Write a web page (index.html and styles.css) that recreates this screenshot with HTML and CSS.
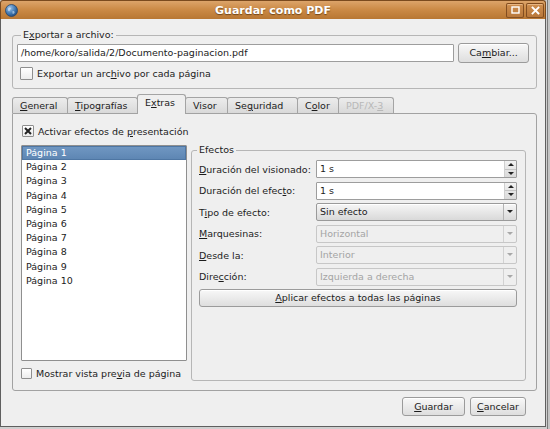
FILE: index.html
```html
<!DOCTYPE html>
<html lang="es">
<head>
<meta charset="utf-8">
<title>Guardar como PDF</title>
<link rel="stylesheet" href="styles.css">
</head>
<body>
<div class="desktop">
  <div class="window">
    <div class="titlebar">
      <div class="tb-left">
        <svg class="globe" width="13" height="13" viewBox="0 0 13 13">
          <defs>
            <radialGradient id="g" cx="0.35" cy="0.3" r="0.8">
              <stop offset="0" stop-color="#9cc4ea"/>
              <stop offset="0.6" stop-color="#3e74ad"/>
              <stop offset="1" stop-color="#1f4777"/>
            </radialGradient>
          </defs>
          <circle cx="6.5" cy="6.5" r="6" fill="url(#g)" stroke="#26456b" stroke-width="0.8"/>
          <path d="M3 4.5 C4 3 5.5 3.2 6 4.3 C6.3 5.2 5 5.6 4.8 6.6 C4.6 7.6 3.4 7.4 3 6.3 Z" fill="#cfe3f4" opacity="0.7"/>
          <path d="M7.5 7 C8.6 6.6 9.8 7.2 9.6 8.4 C9.4 9.6 8.2 10.2 7.4 9.4 Z" fill="#cfe3f4" opacity="0.6"/>
        </svg>
      </div>
      <div class="title">Guardar como PDF</div>
      <div class="tb-right">
        <span class="wbtn">
          <svg width="9" height="8" viewBox="0 0 9 8"><rect x="1" y="1" width="7" height="6" fill="none" stroke="#fff" stroke-width="1.4"/></svg>
        </span>
        <span class="wbtn">
          <svg width="9" height="9" viewBox="0 0 9 9"><path d="M1.5 1.5 L7.5 7.5 M7.5 1.5 L1.5 7.5" stroke="#fff" stroke-width="1.8" stroke-linecap="square"/></svg>
        </span>
      </div>
    </div>
    <div class="client">
      <fieldset class="group export-group">
        <legend class="export-legend">E<u>x</u>portar a archivo:</legend>
        <div class="file-row">
          <div class="entry file-entry">/home/koro/salida/2/Documento-paginacion.pdf</div>
          <div class="btn change-btn">Ca<u>m</u>biar...</div>
        </div>
        <div class="check-row export-check">
          <span class="check"></span>
          <span class="ctext">Exportar un arc<u>h</u>ivo por cada página</span>
        </div>
      </fieldset>

      <div class="tabbar">
        <div class="tab tab-general"><u>G</u>eneral</div>
        <div class="tab tab-tipo"><u>T</u>ipografías</div>
        <div class="tab tab-extras active">E<u>x</u>tras</div>
        <div class="tab tab-visor">Visor</div>
        <div class="tab tab-seg">Se<u>g</u>uridad</div>
        <div class="tab tab-color">C<u>o</u>lor</div>
        <div class="tab tab-pdfx disabled">PDF/X-<u>3</u></div>
      </div>

      <div class="pane">
        <div class="check-row pane-check">
          <span class="check checked">
            <svg width="8" height="8" viewBox="0 0 8 8"><path d="M1 1 L7 7 M7 1 L1 7" stroke="#222" stroke-width="2"/></svg>
          </span>
          <span class="ctext">Activar efectos de <u>p</u>resentación</span>
        </div>
        <div class="pane-body">
          <div class="list-col">
            <div class="list">
              <div class="item selected">Página 1</div>
              <div class="item">Página 2</div>
              <div class="item">Página 3</div>
              <div class="item">Página 4</div>
              <div class="item">Página 5</div>
              <div class="item">Página 6</div>
              <div class="item">Página 7</div>
              <div class="item">Página 8</div>
              <div class="item">Página 9</div>
              <div class="item">Página 10</div>
            </div>
            <div class="check-row preview-check">
              <span class="check"></span>
              <span class="ctext">Mostrar vista pre<u>v</u>ia de página</span>
            </div>
          </div>

          <fieldset class="group effects-group">
            <legend class="effects-legend">Efectos</legend>
            <div class="frow">
              <span class="flabel"><u>D</u>uración del visionado:</span>
              <div class="entry spin"><span class="spin-text">1 s</span>
                <span class="spin-btns"><span class="sb up"></span><span class="sb down"></span></span>
              </div>
            </div>
            <div class="frow">
              <span class="flabel">Duración del efec<u>t</u>o:</span>
              <div class="entry spin"><span class="spin-text">1 s</span>
                <span class="spin-btns"><span class="sb up"></span><span class="sb down"></span></span>
              </div>
            </div>
            <div class="frow">
              <span class="flabel">T<u>i</u>po de efecto:</span>
              <div class="combo"><span class="combo-text">Sin efecto</span><span class="combo-arrow"></span></div>
            </div>
            <div class="frow">
              <span class="flabel"><u>M</u>arquesinas:</span>
              <div class="combo disabled"><span class="combo-text">Horizontal</span><span class="combo-arrow"></span></div>
            </div>
            <div class="frow">
              <span class="flabel"><u>D</u>esde la:</span>
              <div class="combo disabled"><span class="combo-text">Interior</span><span class="combo-arrow"></span></div>
            </div>
            <div class="frow">
              <span class="flabel">Dire<u>c</u>ción:</span>
              <div class="combo disabled"><span class="combo-text">Izquierda a derecha</span><span class="combo-arrow"></span></div>
            </div>
            <div class="btn apply-btn"><u>A</u>plicar efectos a todas las páginas</div>
          </fieldset>
        </div>
      </div>

      <div class="footer">
        <div class="btn save-btn"><u>G</u>uardar</div>
        <div class="btn cancel-btn"><u>C</u>ancelar</div>
      </div>
    </div>
  </div>
</div>
</body>
</html>
```

FILE: styles.css
```css
* { box-sizing: border-box; }
html, body { margin: 0; padding: 0; }
body {
  width: 550px;
  height: 429px;
  overflow: hidden;
  font-family: "DejaVu Sans", "Liberation Sans", sans-serif;
  font-size: 9.5px;
  color: #1c1c1c;
  background: #3a3a3a;
}
u { text-decoration: underline; text-underline-offset: 1px; text-decoration-thickness: 1px; }

.desktop {
  position: relative;
  width: 550px;
  height: 429px;
  background: linear-gradient(90deg, #cfcfcf 0, #cfcfcf 547px, #7a7a7a 547px, #7a7a7a 548px, #c4c4c4 548px);
}
.window {
  position: absolute;
  left: 0;
  top: 0;
  width: 546px;
  height: 427px;
  display: flex;
  flex-direction: column;
}

/* title bar */
.titlebar {
  height: 19px;
  display: grid;
  grid-template-columns: 60px 1fr 60px;
  align-items: center;
  background: linear-gradient(#dca46a 0, #cc8b47 45%, #b87733 100%);
  border: 1px solid #7a4a1e;
  border-bottom: none;
  border-radius: 3px 3px 0 0;
}
.tb-left { display: flex; align-items: center; padding-left: 4px; }
.globe { display: block; }
.title {
  text-align: center;
  color: #fff;
  font-weight: bold;
  font-size: 11px;
  text-shadow: 0 1px 1px rgba(60, 30, 0, 0.6);
}
.tb-right { display: flex; justify-content: flex-end; gap: 2px; padding-right: 1px; }
.wbtn {
  width: 18px;
  height: 15px;
  display: flex;
  align-items: center;
  justify-content: center;
  border: 1px solid rgba(110, 60, 20, 0.75);
  border-radius: 2px;
  background: linear-gradient(#cf8f50, #b9783a);
  box-shadow: inset 0 1px 0 rgba(255, 220, 180, 0.5);
}
.wbtn svg { display: block; }

/* client */
.client {
  flex: 1;
  background: #efefef;
  border: 1px solid #5f5f5f;
  border-top: none;
  display: flex;
  flex-direction: column;
}

.group {
  border: 1px solid #b6b6b6;
  border-radius: 3px;
  margin: 0;
  min-width: 0;
}
.group legend {
  line-height: 12px;
  padding: 0 2px;
}

.export-group {
  margin: 10px 8px 0 11px;
  padding: 2px 7px 8px 4px;
}
.export-legend { margin-left: 4px; }

.file-row {
  display: flex;
  align-items: center;
  gap: 4px;
  height: 20px;
}
.entry {
  background: #fff;
  border: 1px solid #9d9d9d;
  border-radius: 1px;
  height: 18px;
  line-height: 16px;
  padding-left: 3px;
  white-space: nowrap;
  overflow: hidden;
}
.file-entry { width: 438px; }
.btn {
  border: 1px solid #9b9b9b;
  border-radius: 3px;
  background: linear-gradient(#f8f8f8, #dedede);
  box-shadow: inset 0 1px 0 #ffffff;
  text-align: center;
  white-space: nowrap;
}
.change-btn { width: 71px; height: 20px; line-height: 18px; }

.check-row { display: flex; align-items: center; gap: 4px; height: 13px; }
.ctext { white-space: nowrap; }
.check {
  width: 13px;
  height: 13px;
  border: 1px solid #8e8e8e;
  border-radius: 1px;
  background: linear-gradient(#ffffff, #ececec);
  display: flex;
  align-items: center;
  justify-content: center;
  flex: none;
}
.export-check { margin: 4px 0 0 3px; }

/* tabs */
.tabbar {
  display: flex;
  align-items: flex-end;
  height: 19px;
  margin: 5px 0 0 11px;
  position: relative;
  z-index: 1;
}
.tab {
  height: 16px;
  border: 1px solid #a4a4a4;
  border-bottom: none;
  border-radius: 3px 3px 0 0;
  background: linear-gradient(#ececec, #d9d9d9);
  margin-right: -1px;
  padding-left: 7px;
  line-height: 15px;
  white-space: nowrap;
}
.tab.active {
  height: 20px;
  background: #efefef;
  margin-bottom: -1px;
  position: relative;
  z-index: 2;
}
.tab.disabled { color: #b8b8b8; }
.tab-general { width: 56px; }
.tab-tipo { width: 71px; }
.tab-extras { width: 49px; }
.tab-visor { width: 43px; }
.tab-seg { width: 71px; }
.tab-color { width: 42px; }
.tab-pdfx { width: 56px; }

/* pane */
.pane {
  margin: 0 8px 0 11px;
  height: 278px;
  border: 1px solid #a2a2a2;
  border-radius: 0 3px 3px 3px;
}
.pane-check { margin: 11px 0 0 9px; height: 12px; }
.pane-check .check { width: 12px; height: 12px; }
.pane-body {
  display: flex;
  align-items: flex-start;
  margin: 7px 0 0 8px;
}
.list-col { width: 166px; margin-top: 1px; }
.list {
  height: 216px;
  background: #fff;
  border: 1px solid #8f8f8f;
  border-radius: 1px;
}
.item {
  height: 14.2px;
  line-height: 14px;
  padding-left: 4px;
  white-space: nowrap;
}
.item.selected {
  background: linear-gradient(#7198c3, #5c85b2);
  color: #fff;
  box-shadow: inset 0 0 0 1px #4e76a3;
}
.preview-check { margin-top: 6px; height: 12px; }
.preview-check .check { width: 11px; height: 11px; }

.effects-group {
  width: 335px;
  height: 237px;
  margin-left: 4px;
  padding: 4px 8px 0 7px;
}
.effects-legend { margin-left: -2px; }

.frow {
  display: flex;
  align-items: center;
  height: 18px;
  margin-bottom: 3.5px;
}
.flabel { width: 117px; flex: none; white-space: nowrap; }
.spin {
  width: 201px;
  display: flex;
  align-items: stretch;
  padding-left: 0;
}
.spin-text { flex: 1; padding-left: 3px; }
.spin-btns {
  width: 12px;
  display: flex;
  flex-direction: column;
  border-left: 1px solid #cfcfcf;
  background: linear-gradient(#f2f2f2, #dadada);
}
.sb { flex: 1; position: relative; }
.sb.up { border-bottom: 1px solid #c4c4c4; }
.sb.up::after, .sb.down::after {
  content: "";
  position: absolute;
  left: 3px;
  border-left: 3px solid transparent;
  border-right: 3px solid transparent;
}
.sb.up::after { top: 2px; border-bottom: 3px solid #222; }
.sb.down::after { top: 2px; border-top: 3px solid #222; }

.combo {
  width: 201px;
  height: 18px;
  display: flex;
  border: 1px solid #9a9a9a;
  border-radius: 2px;
  background: linear-gradient(#f6f6f6, #d9d9d9);
  box-shadow: inset 0 1px 0 #fff;
}
.combo-text { flex: 1; padding-left: 3px; line-height: 16px; white-space: nowrap; }
.combo-arrow {
  width: 13px;
  border-left: 1px solid #b3b3b3;
  position: relative;
}
.combo-arrow::after {
  content: "";
  position: absolute;
  left: 3px;
  top: 6px;
  border-left: 3px solid transparent;
  border-right: 3px solid transparent;
  border-top: 3px solid #222;
}
.combo.disabled {
  background: #efefef;
  border-color: #c7c7c7;
  box-shadow: none;
  color: #a4a4a4;
}
.combo.disabled .combo-arrow { border-left-color: #d2d2d2; }
.combo.disabled .combo-arrow::after { border-top-color: #a8a8a8; }

.apply-btn { width: 318px; height: 18px; line-height: 16px; }

/* footer */
.footer {
  display: flex;
  justify-content: flex-end;
  gap: 5px;
  margin: 6px 19px 0 0;
}
.save-btn { width: 63px; height: 19px; line-height: 17px; }
.cancel-btn { width: 56px; height: 19px; line-height: 17px; }
```
